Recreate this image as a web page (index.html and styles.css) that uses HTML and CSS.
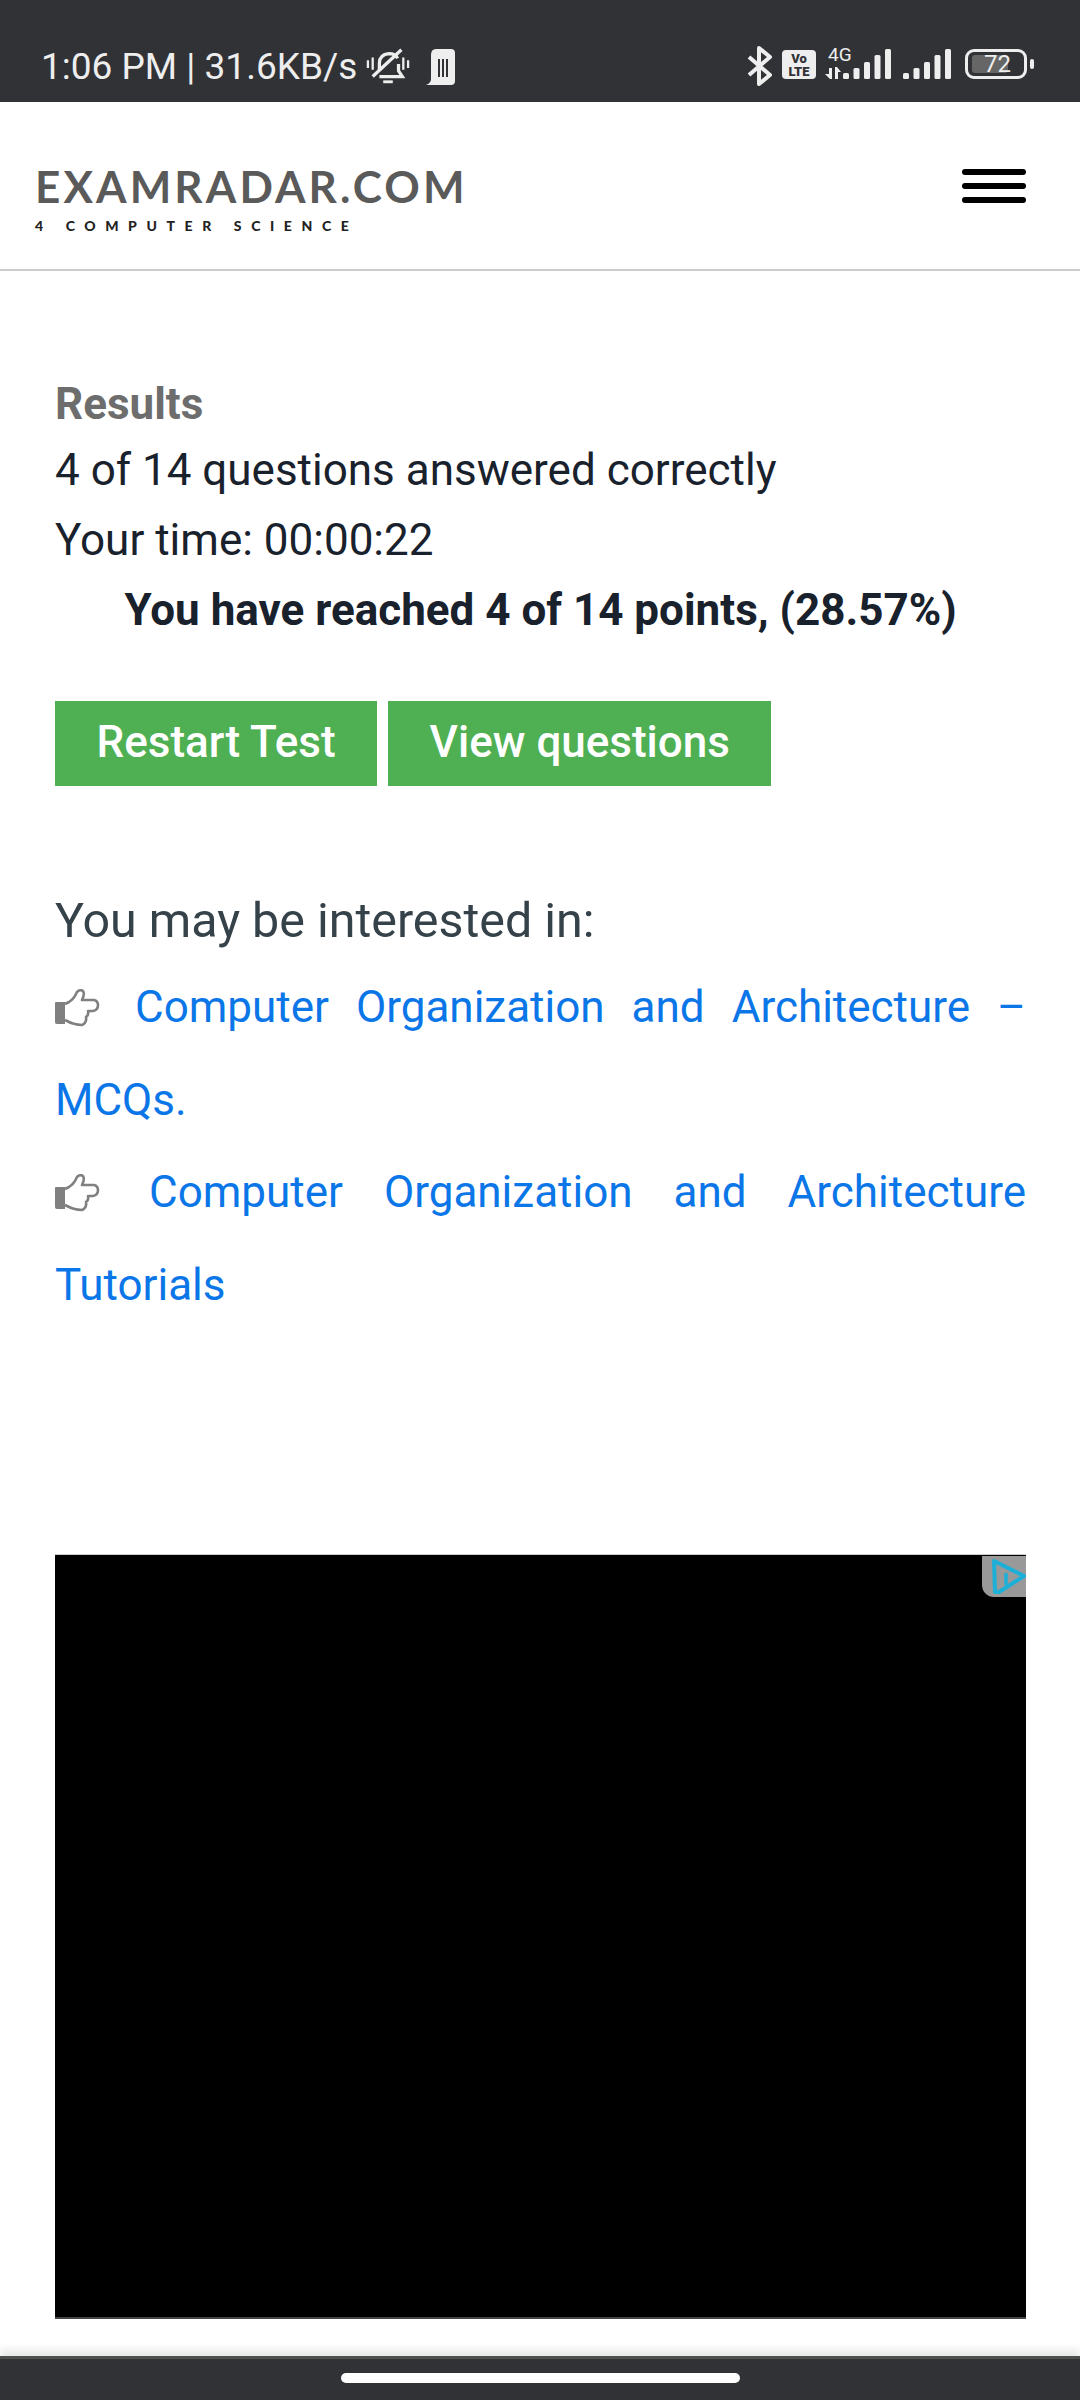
FILE: index.html
```html
<!DOCTYPE html>
<html>
<head>
  <title>Examradar results</title>
  <link rel="stylesheet" href="styles.css">
</head>
<body>
<div class="page">

  <div class="statusbar">
    <div class="status-left">
      <span class="clock">1:06 PM | 31.6KB/s</span>
      <svg class="ic-bell" viewBox="0 0 46 38" fill="none" stroke="#eee" stroke-width="3.400">
        <path d="M14 24 V16 Q14 7 24 6 Q31 6 33 11 M34 17 V24 L38 30 H14"/>
        <path d="M18 35.500 H28" stroke-width="3"/>
        <path d="M7 30 L37 2"/>
        <path d="M2 13 V21 M7 10 V23 M39 10 V23 M44 13 V21" stroke-width="2.400"/>
      </svg>
      <svg class="ic-sim" viewBox="0 0 29 36">
        <path d="M10 0 H25 Q29 0 29 4 V32 Q29 36 25 36 H0 Q5 34 5 30 V6 Q5 0 10 0 Z" fill="#eee"/>
        <path d="M13 10 V28 M17 10 V28 M21 10 V28" stroke="#313236" stroke-width="2"/>
      </svg>
    </div>
    <div class="status-right">
      <svg class="ic-bt" viewBox="0 0 25 40" fill="none" stroke="#eee" stroke-width="4" stroke-linejoin="round">
        <path d="M2 11 L23 29 L12 38 V2 L23 11 L2 29"/>
      </svg>
      <span class="volte"><span>Vo</span><span>LTE</span></span>
      <span class="net">
        <span class="net-label">4G</span>
        <svg class="ic-arrows" viewBox="0 0 17 12" fill="#eee">
          <path d="M0 7 H4 V1 H7 V12 H5 Z M10 0 H12 L16 5 H13 V12 H10 Z"/>
        </svg>
      </span>
      <svg class="ic-signal" viewBox="0 0 48 30" fill="#eee">
        <rect x="0" y="24" width="6" height="6" rx="1.500"/>
        <rect x="10.500" y="19" width="6" height="11" rx="1.500"/>
        <rect x="21" y="13" width="6" height="17" rx="1.500"/>
        <rect x="31.500" y="6" width="6" height="24" rx="1.500"/>
        <rect x="42" y="0" width="6" height="30" rx="1.500"/>
      </svg>
      <svg class="ic-signal ic-signal-2" viewBox="0 0 48 30" fill="#eee">
        <rect x="0" y="24" width="6" height="6" rx="1.500"/>
        <rect x="10.500" y="19" width="6" height="11" rx="1.500"/>
        <rect x="21" y="13" width="6" height="17" rx="1.500"/>
        <rect x="31.500" y="6" width="6" height="24" rx="1.500"/>
        <rect x="42" y="0" width="6" height="30" rx="1.500"/>
      </svg>
      <span class="battery">
        <span class="battery-box"><span class="battery-fill"></span><span class="battery-num">72</span></span>
        <span class="battery-tip"></span>
      </span>
    </div>
  </div>

  <div class="header">
    <div class="logo">
      <div class="logo-name">EXAMRADAR.COM</div>
      <div class="logo-sub">4 COMPUTER SCIENCE</div>
    </div>
    <div class="burger"><span></span><span></span><span></span></div>
  </div>

  <div class="content">
    <div class="results-title">Results</div>
    <p class="line">4 of 14 questions answered correctly</p>
    <p class="line">Your time: 00:00:22</p>
    <p class="line score">You have reached 4 of 14 points, (28.57%)</p>

    <div class="buttons">
      <a class="btn">Restart Test</a>
      <a class="btn">View questions</a>
    </div>

    <div class="interest">You may be interested in:</div>
    <p class="link-row">
      <svg class="hand" viewBox="0 0 45 38" fill="none" stroke="#808080" stroke-width="2.600" stroke-linejoin="round">
        <path d="M0 14 Q0 13 1 13 H10 V35 H2 Q0 35 0 33 Z" fill="#808080" stroke="none"/>
        <path d="M10 15 L14 13 Q19 10 22 3 Q25 0 28 2 Q30 5 27 11 H39 Q43 12 43 16 Q43 21 38 22 H33 Q34 26 31 28 Q32 34 27 36 Q19 36 10 31"/>
      </svg>
      <a>Computer Organization and Architecture – MCQs.</a>
    </p>
    <p class="link-row">
      <svg class="hand" viewBox="0 0 45 38" fill="none" stroke="#808080" stroke-width="2.600" stroke-linejoin="round">
        <path d="M0 14 Q0 13 1 13 H10 V35 H2 Q0 35 0 33 Z" fill="#808080" stroke="none"/>
        <path d="M10 15 L14 13 Q19 10 22 3 Q25 0 28 2 Q30 5 27 11 H39 Q43 12 43 16 Q43 21 38 22 H33 Q34 26 31 28 Q32 34 27 36 Q19 36 10 31"/>
      </svg>
      <a>Computer Organization and Architecture Tutorials</a>
    </p>

    <div class="ad">
      <div class="ad-badge">
        <svg viewBox="0 0 44 41" fill="none" stroke="#1cb0d8" stroke-width="4" stroke-linejoin="round">
          <path d="M12 5 L42 20 L17 36 H13 Z"/>
          <path d="M24 17 V29" stroke-width="3.500"/>
        </svg>
      </div>
    </div>
  </div>

  <div class="navbar"><span class="nav-pill"></span></div>
</div>
</body>
</html>
```

FILE: styles.css
```css
html, body {
    margin: 0;
    padding: 0;
    background: #fff;
}

body {
    font-family: Roboto, "Liberation Sans", sans-serif;
    color: #18212c;
}

.page {
    width: 1080px;
    height: 2400px;
    display: flex;
    flex-direction: column;
    overflow: hidden;
}

/* status bar */
.statusbar {
    height: 102px;
    flex: none;
    box-sizing: border-box;
    background: #313236;
    padding: 45px 46px 0 41px;
    display: flex;
    justify-content: space-between;
    color: #eee;
}

.status-left, .status-right {
    display: flex;
    align-items: flex-start;
}

.clock {
    font-size: 37px;
    line-height: 44px;
}

.ic-bell {
    width: 44px;
    height: 38px;
    margin: 2px 0 0 9px;
}

.ic-sim {
    width: 29px;
    height: 36px;
    margin: 4px 0 0 16px;
}

.ic-bt {
    width: 25px;
    height: 40px;
    margin: 1px 0 0 -2px;
}

.volte {
    width: 34px;
    height: 29px;
    margin: 5px 0 0 10px;
    border-radius: 4px;
    background: #eee;
    color: #313236;
    display: flex;
    flex-direction: column;
    align-items: center;
    font-size: 13px;
    line-height: 13px;
    font-weight: 900;
    padding-top: 2px;
    box-sizing: border-box;
}

.net {
    width: 17px;
    margin-left: 9px;
    display: flex;
    flex-direction: column;
    align-items: flex-start;
}

.net-label {
    font-size: 19px;
    line-height: 20px;
    margin: 0 0 0 3px;
}

.ic-arrows {
    width: 17px;
    height: 12px;
    margin-top: 2px;
}

.ic-signal {
    width: 48px;
    height: 30px;
    margin: 4px 0 0 1px;
}

.ic-signal-2 {
    margin-left: 12px;
}

.battery {
    display: flex;
    align-items: center;
    margin: 4px 0 0 14px;
}

.battery-box {
    position: relative;
    width: 62px;
    height: 30px;
    box-sizing: border-box;
    border: 3px solid #eee;
    border-radius: 9px;
    display: block;
}

.battery-fill {
    position: absolute;
    left: 4px;
    top: 3px;
    width: 36px;
    height: 18px;
    background: #666;
    border-radius: 3px;
}

.battery-num {
    position: absolute;
    left: 16px;
    top: -2px;
    font-size: 24px;
    line-height: 28px;
    color: #eee;
}

.battery-tip {
    width: 4px;
    height: 10px;
    margin-left: 3px;
    background: #eee;
    border-radius: 2px;
}

/* header */
.header {
    height: 169px;
    flex: none;
    box-sizing: border-box;
    border-bottom: 2px solid #ccc;
    padding: 0 54px 0 35px;
    display: flex;
    justify-content: space-between;
    align-items: center;
}

.logo {
    padding-top: 26px;
}

.logo-name {
    font-family: Lato, sans-serif;
    font-size: 44px;
    line-height: 46px;
    letter-spacing: 3.1px;
    color: #5a5a5a;
    font-weight: 700;
    white-space: nowrap;
}

.logo-sub {
    font-family: Lato, sans-serif;
    margin-top: 8px;
    font-size: 14px;
    line-height: 18px;
    letter-spacing: 9.6px;
    font-weight: 900;
    color: #222;
    white-space: nowrap;
}

.burger {
    width: 64px;
    display: flex;
    flex-direction: column;
    gap: 8px;
}

.burger span {
    height: 6px;
    background: #000;
    border-radius: 3px;
}

/* main content */
.content {
    flex: 1;
    box-sizing: border-box;
    padding: 103px 54px 0 55px;
}

.results-title {
    font-size: 44px;
    line-height: 61px;
    font-weight: 700;
    color: #6d6d6d;
}

.line {
    margin: 0;
    font-size: 44px;
    line-height: 70px;
    color: #18212c;
}

.score {
    font-weight: 700;
    text-align: center;
}

.buttons {
    margin-top: 56px;
    display: flex;
    gap: 11px;
}

.btn {
    height: 85px;
    line-height: 82px;
    padding: 0 41.500px;
    background: #4fb053;
    color: #fff;
    font-size: 44px;
    font-weight: 500;
}

.interest {
    margin-top: 98px;
    margin-bottom: 3px;
    font-size: 48.400px;
    line-height: 74px;
    color: #36424a;
}

.link-row {
    margin: 0;
    font-size: 44px;
    line-height: 92.500px;
    text-align: justify;
}

.link-row a {
    color: #0b76e8;
}

.hand {
    width: 45px;
    height: 38px;
    vertical-align: -5px;
    margin-right: 8px;
}

.ad {
    position: relative;
    margin-top: 223px;
    height: 762px;
    background: #000;
    border-top: 1px solid #ccc;
    border-bottom: 2px solid #444;
}

.ad-badge {
    position: absolute;
    top: 1px;
    right: 0;
    width: 44px;
    height: 41px;
    background: #999;
    border-bottom-left-radius: 12px;
}

.ad-badge svg {
    display: block;
    width: 44px;
    height: 41px;
}

/* bottom bar */
.navbar {
    height: 44px;
    flex: none;
    box-sizing: border-box;
    background: #313236;
    border-top: 3px solid #4d4f4f;
    box-shadow: 0 -6px 8px rgba(0, 0, 0, 0.1);
    display: flex;
    justify-content: center;
    padding-top: 14px;
}

.nav-pill {
    width: 399px;
    height: 10px;
    background: #fff;
    border-radius: 5px;
}
```
